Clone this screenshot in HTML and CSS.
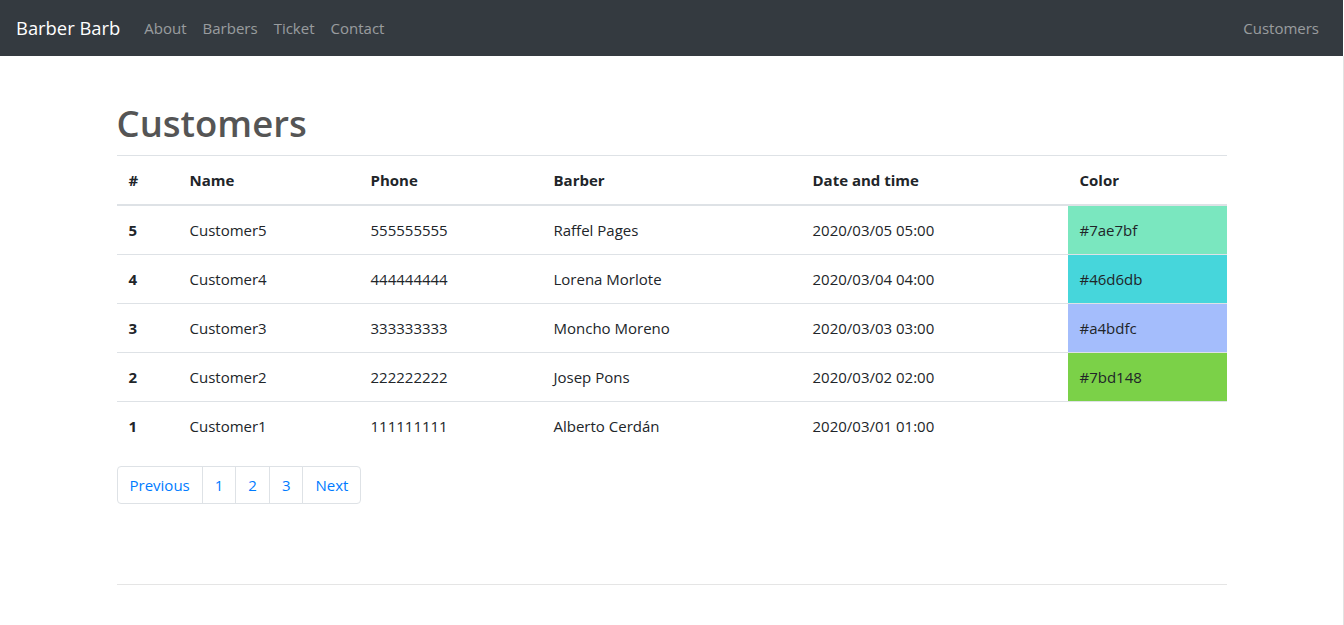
FILE: index.html
```html
<!DOCTYPE html>
<html lang="en">
<head>
<meta charset="utf-8">
<title>Barber Barb - Customers</title>
<link rel="stylesheet" href="styles.css">
</head>
<body>
<nav class="navbar">
  <a class="brand" href="#">Barber Barb</a>
  <ul class="nav">
    <li><a href="#">About</a></li>
    <li><a href="#">Barbers</a></li>
    <li><a href="#">Ticket</a></li>
    <li><a href="#">Contact</a></li>
  </ul>
  <ul class="nav nav-right">
    <li><a href="#">Customers</a></li>
  </ul>
</nav>
<div class="page">
  <main class="container">
    <h1 class="title">Customers</h1>
    <table class="table">
      <colgroup>
        <col class="c-id"><col class="c-name"><col class="c-phone"><col class="c-barber"><col class="c-date"><col class="c-color">
      </colgroup>
      <thead>
        <tr><th>#</th><th>Name</th><th>Phone</th><th>Barber</th><th>Date and time</th><th>Color</th></tr>
      </thead>
      <tbody>
        <tr><th>5</th><td>Customer5</td><td>555555555</td><td>Raffel Pages</td><td>2020/03/05 05:00</td><td class="swatch" style="background-color:#7ae7bf">#7ae7bf</td></tr>
        <tr><th>4</th><td>Customer4</td><td>444444444</td><td>Lorena Morlote</td><td>2020/03/04 04:00</td><td class="swatch" style="background-color:#46d6db">#46d6db</td></tr>
        <tr><th>3</th><td>Customer3</td><td>333333333</td><td>Moncho Moreno</td><td>2020/03/03 03:00</td><td class="swatch" style="background-color:#a4bdfc">#a4bdfc</td></tr>
        <tr><th>2</th><td>Customer2</td><td>222222222</td><td>Josep Pons</td><td>2020/03/02 02:00</td><td class="swatch" style="background-color:#7bd148">#7bd148</td></tr>
        <tr><th>1</th><td>Customer1</td><td>111111111</td><td>Alberto Cerdán</td><td>2020/03/01 01:00</td><td></td></tr>
      </tbody>
    </table>
    <ul class="pagination">
      <li><a href="#">Previous</a></li>
      <li><a href="#">1</a></li>
      <li><a href="#">2</a></li>
      <li><a href="#">3</a></li>
      <li><a href="#">Next</a></li>
    </ul>
    <footer class="footer"><hr class="rule"></footer>
  </main>
</div>
</body>
</html>
```
FILE: styles.css
```css
* { box-sizing: border-box; }
html, body { margin: 0; padding: 0; }
body {
  font-family: "Open Sans", "Noto Sans", sans-serif;
  font-size: 15px;
  line-height: 24px;
  color: #212529;
  background: #fff;
}
a { text-decoration: none; }

.navbar {
  display: flex;
  align-items: center;
  height: 56px;
  padding: 8px 16px;
  background: #343a40;
  margin-right: 1px;
}
.brand {
  color: #fff;
  font-size: 18.4px;
  line-height: 30px;
  margin-right: 16px;
  padding: 5px 0;
}
.nav {
  display: flex;
  list-style: none;
  margin: 0;
  padding: 0;
}
.nav a {
  display: block;
  padding: 8px;
  color: rgba(255, 255, 255, 0.5);
}
.nav-right { margin-left: auto; }

.page {
  border-right: 1px solid #e3e3e3;
  min-height: 569px;
}
.container {
  width: 1140px;
  margin: 0 auto;
  padding: 43px 15px 0;
}
.title {
  margin: 0 0 8px;
  font-size: 36.5px;
  font-weight: 600;
  line-height: 48px;
  color: #555;
}

.table {
  width: 100%;
  border-collapse: collapse;
  table-layout: fixed;
  margin-bottom: 16px;
}
.c-id { width: 61px; }
.c-name { width: 181px; }
.c-phone { width: 183px; }
.c-barber { width: 259px; }
.c-date { width: 267px; }
.c-color { width: 159px; }
.table th, .table td {
  padding: 12px;
  text-align: left;
  vertical-align: top;
  border-top: 1px solid #dee2e6;
  white-space: nowrap;
}
.table th { font-weight: 700; }
.table thead th { border-bottom: 2px solid #dee2e6; }

.pagination {
  display: flex;
  list-style: none;
  margin: 0 0 16px;
  padding: 0;
}
.pagination a {
  display: block;
  padding: 8px 12px;
  line-height: 20px;
  color: #007bff;
  border: 1px solid #dee2e6;
  margin-left: -1px;
  background: #fff;
}
.pagination li:first-child a { margin-left: 0; border-radius: 4px 0 0 4px; }
.pagination li:last-child a { border-radius: 0 4px 4px 0; }

.footer { padding-top: 48px; }
.rule {
  margin: 16px 0;
  border: 0;
  border-top: 1px solid rgba(0, 0, 0, 0.1);
}
```
